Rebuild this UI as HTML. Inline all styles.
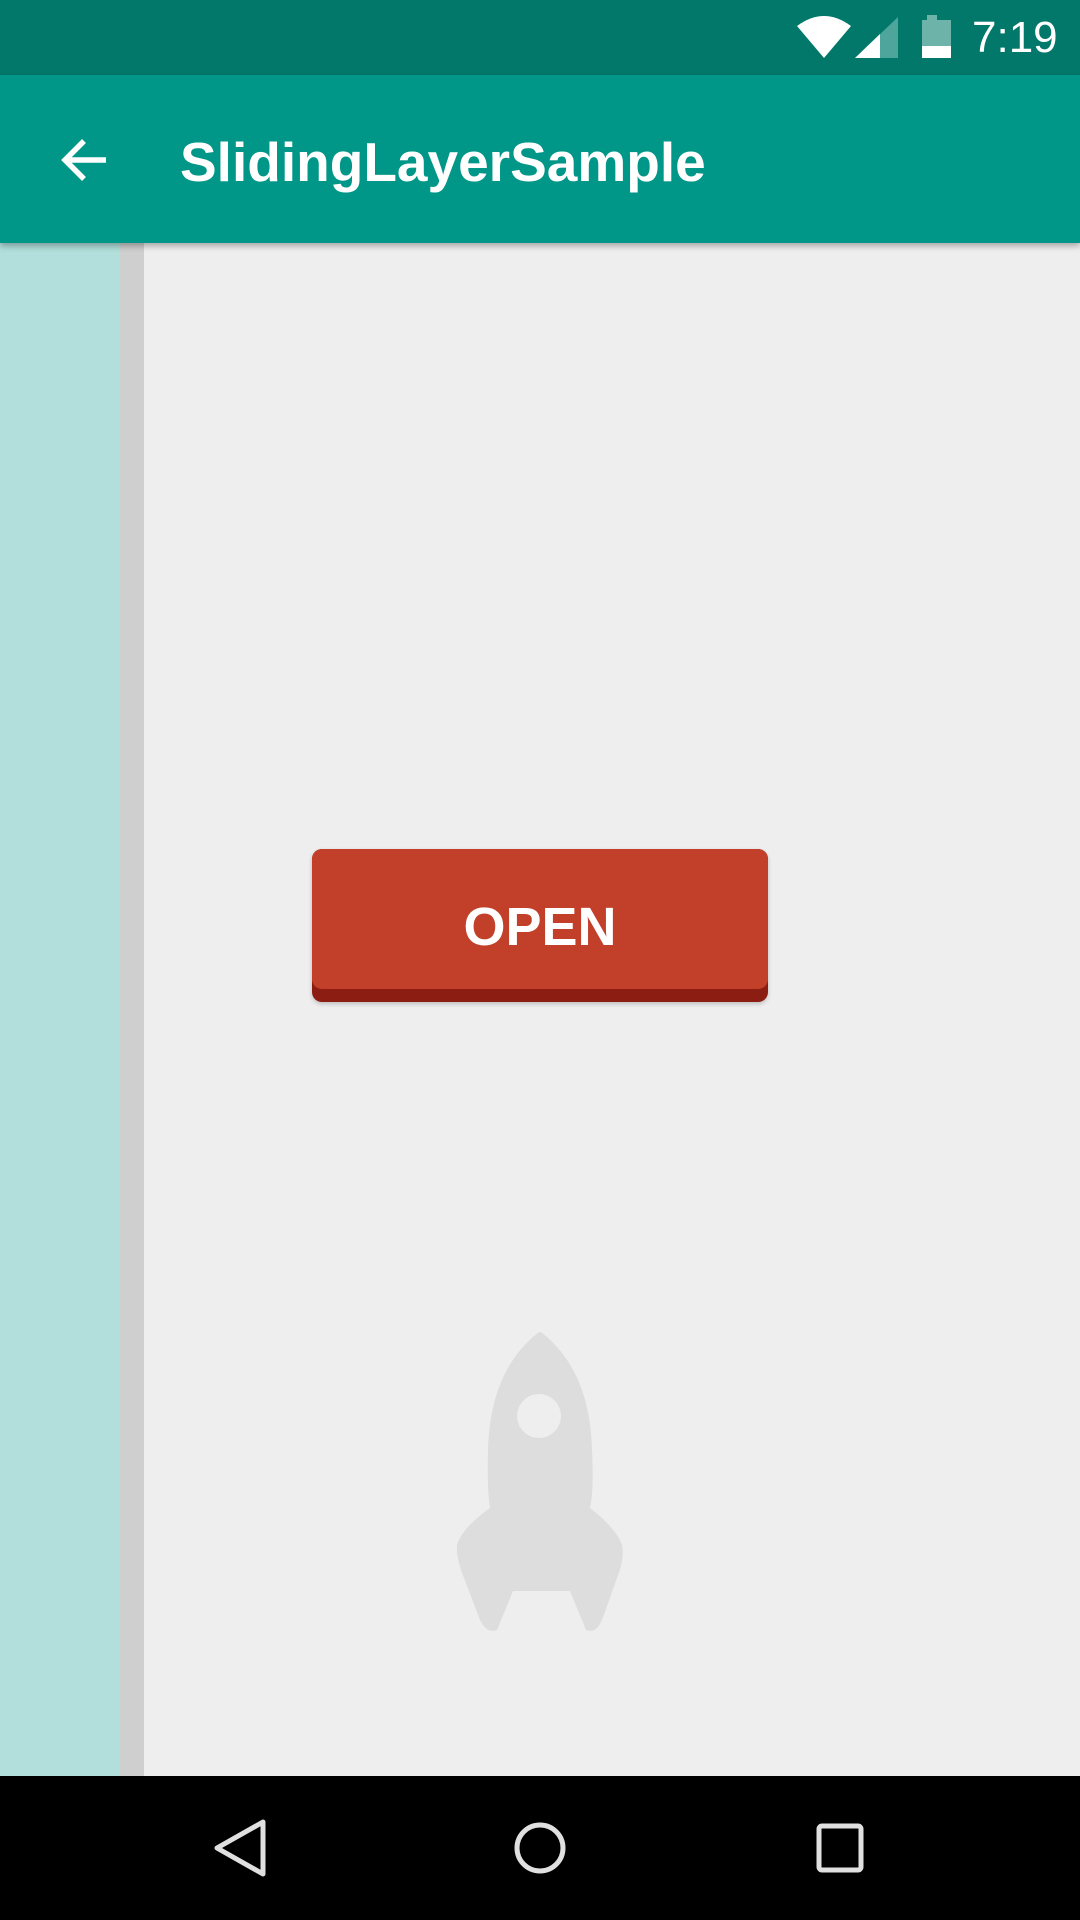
<!DOCTYPE html>
<html><head><meta charset="utf-8"><style>
*{margin:0;padding:0;box-sizing:border-box}
body{width:1080px;height:1920px;position:relative;overflow:hidden;background:#eeeeee;font-family:"Liberation Sans",sans-serif}
.abs{position:absolute}
</style></head><body>
<div class="abs" style="left:0;top:0;width:1080px;height:75px;background:#02786b"></div>
<div class="abs" style="left:0;top:243px;width:120px;height:1533px;background:#b2dfdb"></div>
<div class="abs" style="left:120px;top:243px;width:24px;height:1533px;background:#cfcfcf"></div>
<div class="abs" style="left:0;top:75px;width:1080px;height:168px;background:#009688;box-shadow:0 3px 6px rgba(0,0,0,0.3)"></div>
<svg class="abs" style="left:0;top:0" width="1080" height="243">
 <path d="M797 26 Q824 6 851 26 L824 58 Z" fill="#fff"/>
 <path d="M855 58 L898 17 L898 58 Z" fill="#4da59b"/>
 <path d="M855 58 L880 34 L880 58 Z" fill="#fff"/>
 <rect x="927" y="15" width="10" height="6" fill="#6db3aa"/>
 <rect x="922" y="20" width="29" height="38" fill="#6db3aa"/>
 <rect x="922" y="46" width="29" height="12" fill="#fff"/>
 <path d="M106 160 H66 M84 141 L65 160 L84 179" stroke="#fff" stroke-width="5.5" fill="none"/>
</svg>
<div class="abs" style="left:972px;top:13px;font-size:44px;color:#fff">7:19</div>
<div class="abs" style="left:180px;top:126px;font-size:55px;font-weight:bold;color:#fff;line-height:72px">SlidingLayerSample</div>
<div class="abs" style="left:312px;top:849px;width:456px;height:153px;background:#8c1d12;border-radius:10px;box-shadow:0 2px 4px rgba(0,0,0,0.2)"></div>
<div class="abs" style="left:312px;top:849px;width:456px;height:140px;background:#c23f29;border-radius:10px;color:#fff;font-size:54px;font-weight:bold;text-align:center;line-height:156px">OPEN</div>
<svg class="abs" style="left:0;top:1300px" width="1080" height="350">
 <path d="M539 32 Q490 70 488 150 Q487 190 490 208 Q462 228 457 245 Q456 258 464 278 L480 320 Q487 334 497 330 L513 291 L570 291 L586 330 Q596 334 602 320 L617 278 Q625 258 622 245 Q616 228 590 208 Q594 190 592 150 Q590 70 541 32 Z" fill="#dddddd"/>
 <circle cx="539" cy="116" r="22" fill="#eeeeee"/>
</svg>
<div class="abs" style="left:0;top:1776px;width:1080px;height:144px;background:#000"></div>
<svg class="abs" style="left:0;top:1776px" width="1080" height="144">
 <path d="M263 46 L263 98 L217 72 Z" stroke="#e0e0e0" stroke-width="5" fill="none" stroke-linejoin="round"/>
 <circle cx="540" cy="72" r="23" stroke="#e0e0e0" stroke-width="5" fill="none"/>
 <rect x="819" y="50" width="42" height="44" rx="3" stroke="#e0e0e0" stroke-width="5" fill="none"/>
</svg>
</body></html>
